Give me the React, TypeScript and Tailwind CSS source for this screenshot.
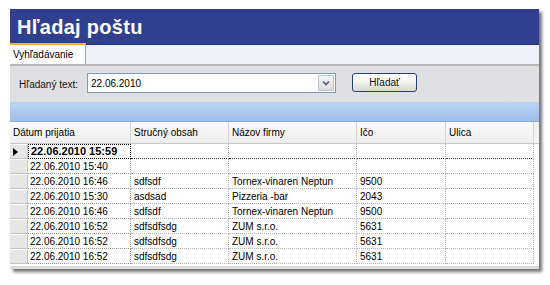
import React from "react";

type Row = {
  date: string;
  obsah: string;
  firma: string;
  ico: string;
  ulica: string;
};

const rows: Row[] = [
  { date: "22.06.2010 15:59", obsah: "", firma: "", ico: "", ulica: "" },
  { date: "22.06.2010 15:40", obsah: "", firma: "", ico: "", ulica: "" },
  { date: "22.06.2010 16:46", obsah: "sdfsdf", firma: "Tornex-vinaren Neptun", ico: "9500", ulica: "" },
  { date: "22.06.2010 15:30", obsah: "asdsad", firma: "Pizzeria -bar", ico: "2043", ulica: "" },
  { date: "22.06.2010 16:46", obsah: "sdfsdf", firma: "Tornex-vinaren Neptun", ico: "9500", ulica: "" },
  { date: "22.06.2010 16:52", obsah: "sdfsdfsdg", firma: "ZUM s.r.o.", ico: "5631", ulica: "" },
  { date: "22.06.2010 16:52", obsah: "sdfsdfsdg", firma: "ZUM s.r.o.", ico: "5631", ulica: "" },
  { date: "22.06.2010 16:52", obsah: "sdfsdfsdg", firma: "ZUM s.r.o.", ico: "5631", ulica: "" },
];

const cols = "grid grid-cols-[18px_103px_98px_128px_89px_88px_1fr]";

// Simple header cell
const HeadCell = ({ children, span }: { children?: React.ReactNode; span?: boolean }) => (
  <div
    className={`${span ? "col-span-2" : ""} flex items-center px-[3px] border-r border-[#d5d5d5] bg-gradient-to-b from-[#fbfbfb] to-[#eeeeee] h-full`}
  >
    {children}
  </div>
);

function App() {
  return (
    <div className="w-[550px] h-[285px] bg-white pt-[9px] pl-[10px] font-['Liberation_Sans',Arial,sans-serif] text-[10px] text-black">
      <div className="w-[529px] h-[260px] flex flex-col bg-[#e0dfe3] shadow-[3px_3px_3px_rgba(0,0,0,0.55)]">
        {/* Title */}
        <div className="h-[36px] bg-[#303f8e] border-b border-[#232f72] flex items-center pl-[7px]">
          <span className="text-white font-bold text-[20px] tracking-[0.3px] leading-none">Hľadaj poštu</span>
        </div>

        {/* Tab strip */}
        <div className="h-[21px] bg-[#eef2f8] border-b-2 border-[#b9b9b9] flex items-end">
          <div className="h-[21px] w-[76px] bg-white border-t-2 border-t-[#f3b13c] border-r border-r-[#a8a8a8] flex items-center pl-[3px]">
            Vyhľadávanie
          </div>
        </div>

        {/* Search row */}
        <div className="h-[36px] flex items-center">
          <span className="ml-[9px] w-[68px] text-[#111]">Hľadaný text:</span>
          <div className="relative w-[249px] h-[20px] bg-white border border-[#7f9db9] flex items-center pl-[3px] -mt-[2px]">
            22.06.2010
            <div className="absolute right-[1px] top-[1px] w-[16px] h-[16px] bg-gradient-to-b from-[#f4f4f4] to-[#dcdcdc] border border-[#b9c6d8] flex items-center justify-center">
              <svg width="8" height="6" viewBox="0 0 8 6">
                <path d="M1 1.5 L4 4.5 L7 1.5" fill="none" stroke="#4d6185" strokeWidth="1.6" />
              </svg>
            </div>
          </div>
          <button className="ml-[16px] w-[65px] h-[19px] -mt-[4px] rounded-[3px] border border-[#27426f] bg-gradient-to-b from-white via-[#f3f3ef] to-[#d8d6cd] flex items-center justify-center text-[#111]">
            Hľadať
          </button>
        </div>

        {/* Blue bar */}
        <div className="h-[20px] bg-gradient-to-b from-[#bcd3f3] to-[#9fbfeb] border-b border-[#8fa9cf]" />

        {/* Grid */}
        <div className="flex-1 bg-white flex flex-col border-b-[3px] border-[#dcdcdc] leading-[13px]">
          <div className={`${cols} h-[22px] border-b border-[#c8c8c8]`}>
            <HeadCell span>Dátum prijatia</HeadCell>
            <HeadCell>Stručný obsah</HeadCell>
            <HeadCell>Názov firmy</HeadCell>
            <HeadCell>Ičo</HeadCell>
            <HeadCell>Ulica</HeadCell>
            <div className="bg-[#f2f2f2]" />
          </div>
          {rows.map((r, i) => {
            const first = i === 0;
            return (
              <div key={i} className={`${cols} h-[15px] overflow-hidden`}>
                <div className="bg-[#e6e6e6] border-r border-b border-[#c4c4c4] border-t border-t-white flex items-center pl-[3px]">
                  {first && (
                    <svg width="5" height="8" viewBox="0 0 5 8">
                      <path d="M0 0 L5 4 L0 8 Z" fill="#000" />
                    </svg>
                  )}
                </div>
                <div
                  className={`flex items-center px-[2px] border-r border-b border-dotted border-[#9a9a9a] ${
                    first ? "font-bold text-[11px] leading-[11px] border-t border-l border-black" : ""
                  }`}
                >
                  {r.date}
                </div>
                <div className={`flex items-center px-[3px] border-r border-b border-dotted border-[#b5b5b5] ${first ? "border-b-[#444]" : ""}`}>{r.obsah}</div>
                <div className={`flex items-center px-[3px] border-r border-b border-dotted border-[#b5b5b5] ${first ? "border-b-[#444]" : ""}`}>{r.firma}</div>
                <div className={`flex items-center px-[3px] border-r border-b border-dotted border-[#b5b5b5] ${first ? "border-b-[#444]" : ""}`}>{r.ico}</div>
                <div className={`flex items-center px-[3px] border-r border-b border-dotted border-[#b5b5b5] ${first ? "border-b-[#444]" : ""}`}>{r.ulica}</div>
                <div className="bg-white" />
              </div>
            );
          })}
        </div>
      </div>
    </div>
  );
}

export default App;
